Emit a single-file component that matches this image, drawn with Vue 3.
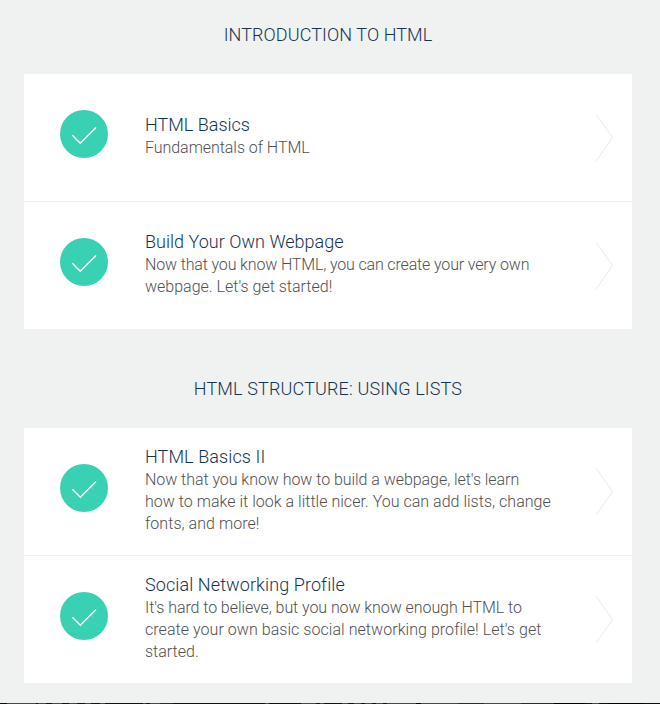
<script setup>
const sections = [
  {
    title: 'INTRODUCTION TO HTML',
    spacing: 0.1,
    items: [
      { title: 'HTML Basics', spacing: 0, lines: [{ text: 'Fundamentals of HTML', spacing: -0.05 }] },
      {
        title: 'Build Your Own Webpage',
        spacing: 0.02,
        lines: [
          { text: 'Now that you know HTML, you can create your very own', spacing: -0.15 },
          { text: "webpage. Let's get started!", spacing: 0 },
        ],
      },
    ],
  },
  {
    title: 'HTML STRUCTURE: USING LISTS',
    spacing: 0.15,
    items: [
      {
        title: 'HTML Basics II',
        spacing: 0.1,
        lines: [
          { text: "Now that you know how to build a webpage, let's learn", spacing: -0.05 },
          { text: 'how to make it look a little nicer. You can add lists, change', spacing: 0.02 },
          { text: 'fonts, and more!', spacing: 0.04 },
        ],
      },
      {
        title: 'Social Networking Profile',
        spacing: 0.1,
        lines: [
          { text: "It's hard to believe, but you now know enough HTML to", spacing: -0.07 },
          { text: "create your own basic social networking profile! Let's get", spacing: 0.05 },
          { text: 'started.', spacing: 0 },
        ],
      },
    ],
  },
]
</script>

<template>
  <main class="page">
    <section v-for="section in sections" :key="section.title" class="section">
      <h2 class="heading"><span :style="{ letterSpacing: section.spacing + 'px' }">{{ section.title }}</span></h2>
      <div class="card">
        <a v-for="item in section.items" :key="item.title" class="item">
          <svg class="badge" viewBox="0 0 48 48">
            <circle cx="24" cy="24" r="24" fill="#39d1b4" />
            <path d="M12.3 25.2 20.3 33.2 36 17.5" fill="none" stroke="#fff" stroke-width="1.5" />
          </svg>
          <div class="copy">
            <h3 class="title"><span :style="{ letterSpacing: item.spacing + 'px' }">{{ item.title }}</span></h3>
            <p v-for="line in item.lines" :key="line.text" class="line">
              <span :style="{ letterSpacing: line.spacing + 'px' }">{{ line.text }}</span>
            </p>
          </div>
          <svg class="arrow" viewBox="0 0 18 48">
            <path d="M1.2.5 17.5 23.5 1.2 47" fill="none" stroke="#ededed" stroke-width="1.1" />
          </svg>
        </a>
      </div>
    </section>
    <div class="strip"></div>
  </main>
</template>

<style>
body {
  margin: 0;
  background: #f0f2f1;
}
</style>

<style scoped>
.page {
  display: flex;
  flex-direction: column;
  box-sizing: border-box;
  height: 704px;
  overflow: hidden;
  background: #f0f2f1;
  font-family: Roboto, "Liberation Sans", sans-serif;
  font-weight: 350;
}
.section {
  padding: 0 28px 25px 24px;
}
.section + .section {
  padding-bottom: 20px;
}
.heading {
  margin: 0;
  height: 74px;
  padding-top: 24px;
  box-sizing: border-box;
  font-size: 18px;
  font-weight: 350;
  line-height: 22px;
  text-align: center;
  color: #143450;
  white-space: nowrap;
}
.card {
  background: #fff;
}
.item {
  display: flex;
  align-items: center;
  height: 127px;
  padding: 0 19px 0 36px;
}
.item + .item {
  border-top: 1px solid #f0f2f1;
}
.badge {
  flex: none;
  width: 48px;
  height: 48px;
  margin-bottom: 7px;
}
.copy {
  flex: 1;
  min-width: 0;
  padding: 0 0 2px 37px;
  white-space: nowrap;
}
.title {
  margin: 0 0 1px;
  font-size: 18px;
  font-weight: 350;
  line-height: 22px;
  color: #143450;
}
.line {
  margin: 0;
  font-size: 16px;
  line-height: 22px;
  color: #505050;
}
.arrow {
  flex: none;
  width: 18px;
  height: 48px;
}
.strip {
  flex: none;
  height: 1px;
  background: linear-gradient(
    90deg,
    #001018 0 7px, #484848 7px 36px, #380006 36px 38px, #484848 38px 46px, #380006 46px 52px,
    #484848 52px 62px, #380006 62px 69px, #484848 69px 77px, #380006 77px 85px, #484848 85px 91px,
    #380006 91px 100px, #484848 100px 105px, #380006 105px 143px, #484848 143px 146px,
    #380006 146px 150px, #484848 150px 160px, #303000 160px 173px, #001810 173px 265px,
    #484848 265px 269px, #001810 269px 301px, #484848 301px 316px, #380006 316px 320px,
    #484848 320px 324px, #380006 324px 342px, #484848 342px 348px, #380006 348px 354px,
    #484848 354px 361px, #380006 361px 365px, #484848 365px 372px, #380006 372px 376px,
    #484848 376px 383px, #380006 383px 387px, #484848 387px 416px, #000 416px 421px,
    #484848 421px 458px, #303000 458px 484px, #484848 484px 521px, #303000 521px 554px,
    #000 554px 585px, #380006 585px 592px, #484848 592px 599px, #001018 599px 609px,
    #000 609px 644px, #001018 644px 660px
  );
}
</style>
